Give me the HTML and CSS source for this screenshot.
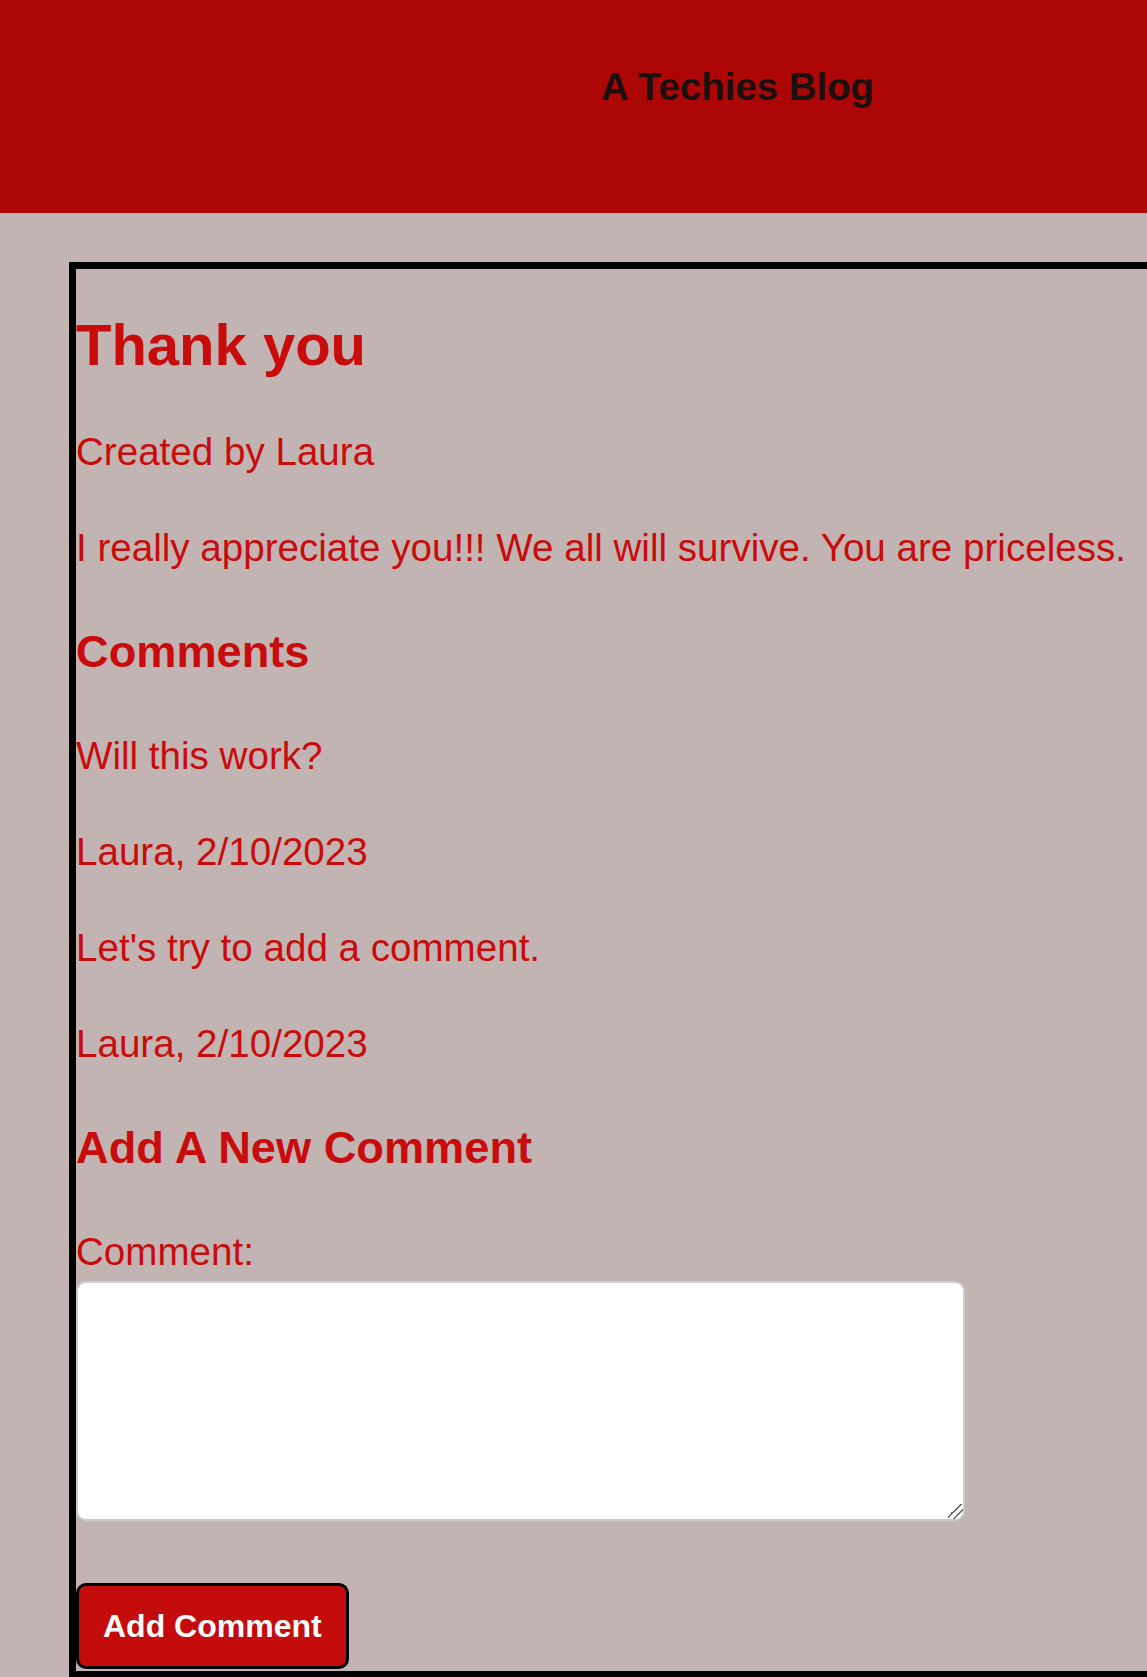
FILE: index.html
```html
<!DOCTYPE html>
<html lang="en">
<head>
<meta charset="utf-8">
<title>A Techies Blog</title>
<link rel="stylesheet" href="styles.css">
</head>
<body>
<header class="site-header">
  <h1 class="site-title">A Techies Blog</h1>
</header>
<main class="post">
  <h1 class="post-title">Thank you</h1>
  <p class="post-meta">Created by Laura</p>
  <p class="post-body">I really appreciate you!!! We all will survive. You are priceless.</p>
  <h2 class="section-title">Comments</h2>
  <div class="comment">
    <p>Will this work?</p>
    <p>Laura, 2/10/2023</p>
  </div>
  <div class="comment">
    <p>Let's try to add a comment.</p>
    <p>Laura, 2/10/2023</p>
  </div>
  <h2 class="section-title">Add A New Comment</h2>
  <form class="comment-form">
    <label class="comment-label" for="comment">Comment:</label>
    <textarea class="comment-input" id="comment" name="comment"></textarea>
    <button class="comment-button" type="submit">Add Comment</button>
  </form>
</main>
</body>
</html>
```
FILE: styles.css
```css
html {
  overflow-x: hidden;
}

body {
  margin: 0;
  background: #c3b4b4;
  font-family: "Liberation Sans", Arial, sans-serif;
  line-height: 1.5;
  color: #c80c0c;
}

.site-header {
  height: 213px;
  box-sizing: border-box;
  background: #ac0606;
  padding-top: 58px;
  padding-left: 601px;
}

.site-title {
  margin: 0;
  font-size: 38.4px;
  line-height: 57.6px;
  font-weight: 700;
  color: #1a1010;
}

.post {
  display: block;
  margin: 49px 0 0 69px;
  width: 1120px;
  border: 7px solid #000;
  padding: 0 0 2px 0;
}

.post-title {
  margin: 33px 0 0;
  font-size: 58px;
  line-height: 86.4px;
  font-weight: 700;
}

.post p {
  font-size: 38.6px;
  line-height: 57.6px;
  margin: 38.4px 0;
}

.post .post-meta {
  margin-top: 35px;
}

.section-title {
  font-size: 45.2px;
  line-height: 67.2px;
  font-weight: 700;
  margin: 41.5px 0;
}

.comment-form {
  display: block;
}

.comment-label {
  display: block;
  font-size: 38.6px;
  line-height: 57.6px;
}

.comment-input {
  display: block;
  box-sizing: border-box;
  width: 889px;
  height: 240px;
  margin: 0;
  border: 2px solid #cccccc;
  border-radius: 10px;
  background: #fff;
  padding: 4px;
  font-family: inherit;
}

.comment-input::-webkit-scrollbar {
  width: 20px;
  height: 20px;
}

.comment-input::-webkit-resizer {
  background: linear-gradient(135deg,
    transparent 40%, #666 40%, #666 47%, transparent 47%,
    transparent 66%, #666 66%, #666 73%, transparent 73%);
}

.comment-button {
  display: block;
  margin-top: 62px;
  padding: 16px 24px;
  border: 3px solid #000;
  border-radius: 10px;
  background: #c40c0c;
  color: #fff;
  font-family: inherit;
  font-size: 32px;
  font-weight: 700;
  line-height: 48px;
}
```
